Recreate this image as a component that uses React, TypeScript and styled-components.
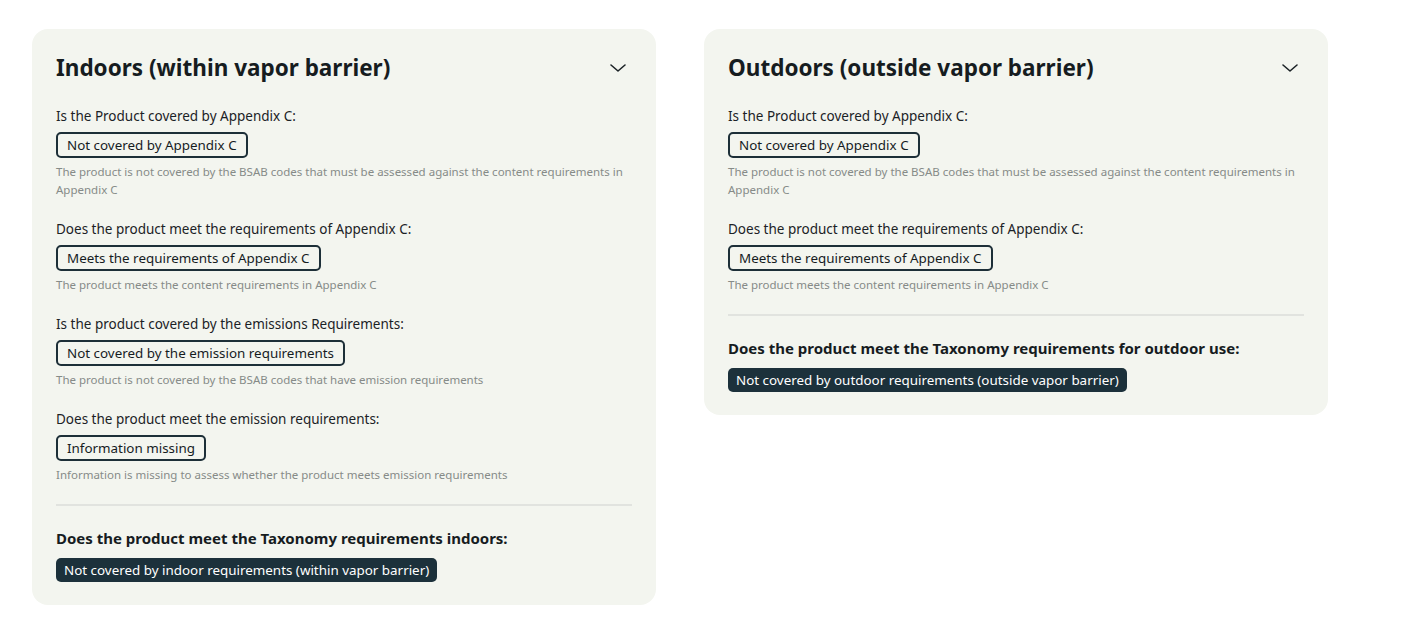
import React from 'react';
import styled, { createGlobalStyle } from 'styled-components';

const GlobalStyle = createGlobalStyle`
    body {
        margin: 0;
        background: #ffffff;
        font-family: "Noto Sans", "Open Sans", sans-serif;
        color: #161c1f;
    }
`

const Page = styled.div`
    display: flex;
    align-items: flex-start;
    gap: 48px;
    padding: 29px 32px;
`

const Card = styled.section`
    width: 624px;
    box-sizing: border-box;
    background: #f3f5ef;
    border-radius: 16px;
    padding: 24px 24px 23px;
`

const Header = styled.div`
    display: flex;
    align-items: center;
    justify-content: space-between;
    height: 30px;
    margin-bottom: 23px;
`

const Title = styled.h2`
    margin: 0;
    font-size: 22.5px;
    line-height: 30px;
    font-weight: 700;
    color: #161c1f;
`

const Toggle = styled.button`
    border: 0;
    background: none;
    padding: 0;
    margin-right: 4px;
    display: flex;
    cursor: pointer;
`

const Question = styled.div`
    margin-bottom: 20px;
`

const Label = styled.div`
    font-size: 13.5px;
    line-height: 20px;
    color: #1b2226;
`

const Chip = styled.span<{ $dark?: boolean }>`
    display: inline-block;
    box-sizing: border-box;
    margin-top: ${(p) => (p.$dark ? '9px' : '6px')};
    height: ${(p) => (p.$dark ? '24px' : '26px')};
    padding: 0 ${(p) => (p.$dark ? '8px' : '9px')};
    border: ${(p) => (p.$dark ? 'none' : '2px solid #1d2f38')};
    border-radius: 5px;
    background: ${(p) => (p.$dark ? '#1c313b' : 'transparent')};
    color: ${(p) => (p.$dark ? '#ffffff' : '#161c1f')};
    font-size: 13.4px;
    line-height: ${(p) => (p.$dark ? '24px' : '22px')};
`

const Hint = styled.div`
    margin-top: 5px;
    font-size: 11.5px;
    line-height: 18px;
    color: #868b88;
`

const Divider = styled.hr`
    border: 0;
    height: 2px;
    background: #e1e3df;
    margin: 0 0 21px;
`

const Verdict = styled.h3`
    margin: 0;
    font-size: 15px;
    line-height: 22px;
    font-weight: 700;
`

type Item = { label: string; chip: string; hint: string };

const Chevron = () => (
    <svg width="20" height="20" viewBox="0 0 20 20" fill="none">
        <path d="M3 7l7 6 7-6" stroke="#1b2226" strokeWidth="1.6" strokeLinecap="round" strokeLinejoin="round" />
    </svg>
)

const Panel = ({ title, items, verdict, result }: { title: string; items: Item[]; verdict: string; result: string }) => (
    <Card>
        <Header>
            <Title>{title}</Title>
            <Toggle aria-label="Collapse"><Chevron /></Toggle>
        </Header>
        {items.map((item) => (
            <Question key={item.label}>
                <Label>{item.label}</Label>
                <Chip>{item.chip}</Chip>
                <Hint>{item.hint}</Hint>
            </Question>
        ))}
        <Divider />
        <Verdict>{verdict}</Verdict>
        <Chip $dark>{result}</Chip>
    </Card>
)

const appendix: Item[] = [
    {
        label: 'Is the Product covered by Appendix C:',
        chip: 'Not covered by Appendix C',
        hint: 'The product is not covered by the BSAB codes that must be assessed against the content requirements in Appendix C',
    },
    {
        label: 'Does the product meet the requirements of Appendix C:',
        chip: 'Meets the requirements of Appendix C',
        hint: 'The product meets the content requirements in Appendix C',
    },
]

const emissions: Item[] = [
    {
        label: 'Is the product covered by the emissions Requirements:',
        chip: 'Not covered by the emission requirements',
        hint: 'The product is not covered by the BSAB codes that have emission requirements',
    },
    {
        label: 'Does the product meet the emission requirements:',
        chip: 'Information missing',
        hint: 'Information is missing to assess whether the product meets emission requirements',
    },
]

export default function App() {
    return (
        <>
            <GlobalStyle />
            <Page>
                <Panel
                    title="Indoors (within vapor barrier)"
                    items={[...appendix, ...emissions]}
                    verdict="Does the product meet the Taxonomy requirements indoors:"
                    result="Not covered by indoor requirements (within vapor barrier)"
                />
                <Panel
                    title="Outdoors (outside vapor barrier)"
                    items={appendix}
                    verdict="Does the product meet the Taxonomy requirements for outdoor use:"
                    result="Not covered by outdoor requirements (outside vapor barrier)"
                />
            </Page>
        </>
    )
}
